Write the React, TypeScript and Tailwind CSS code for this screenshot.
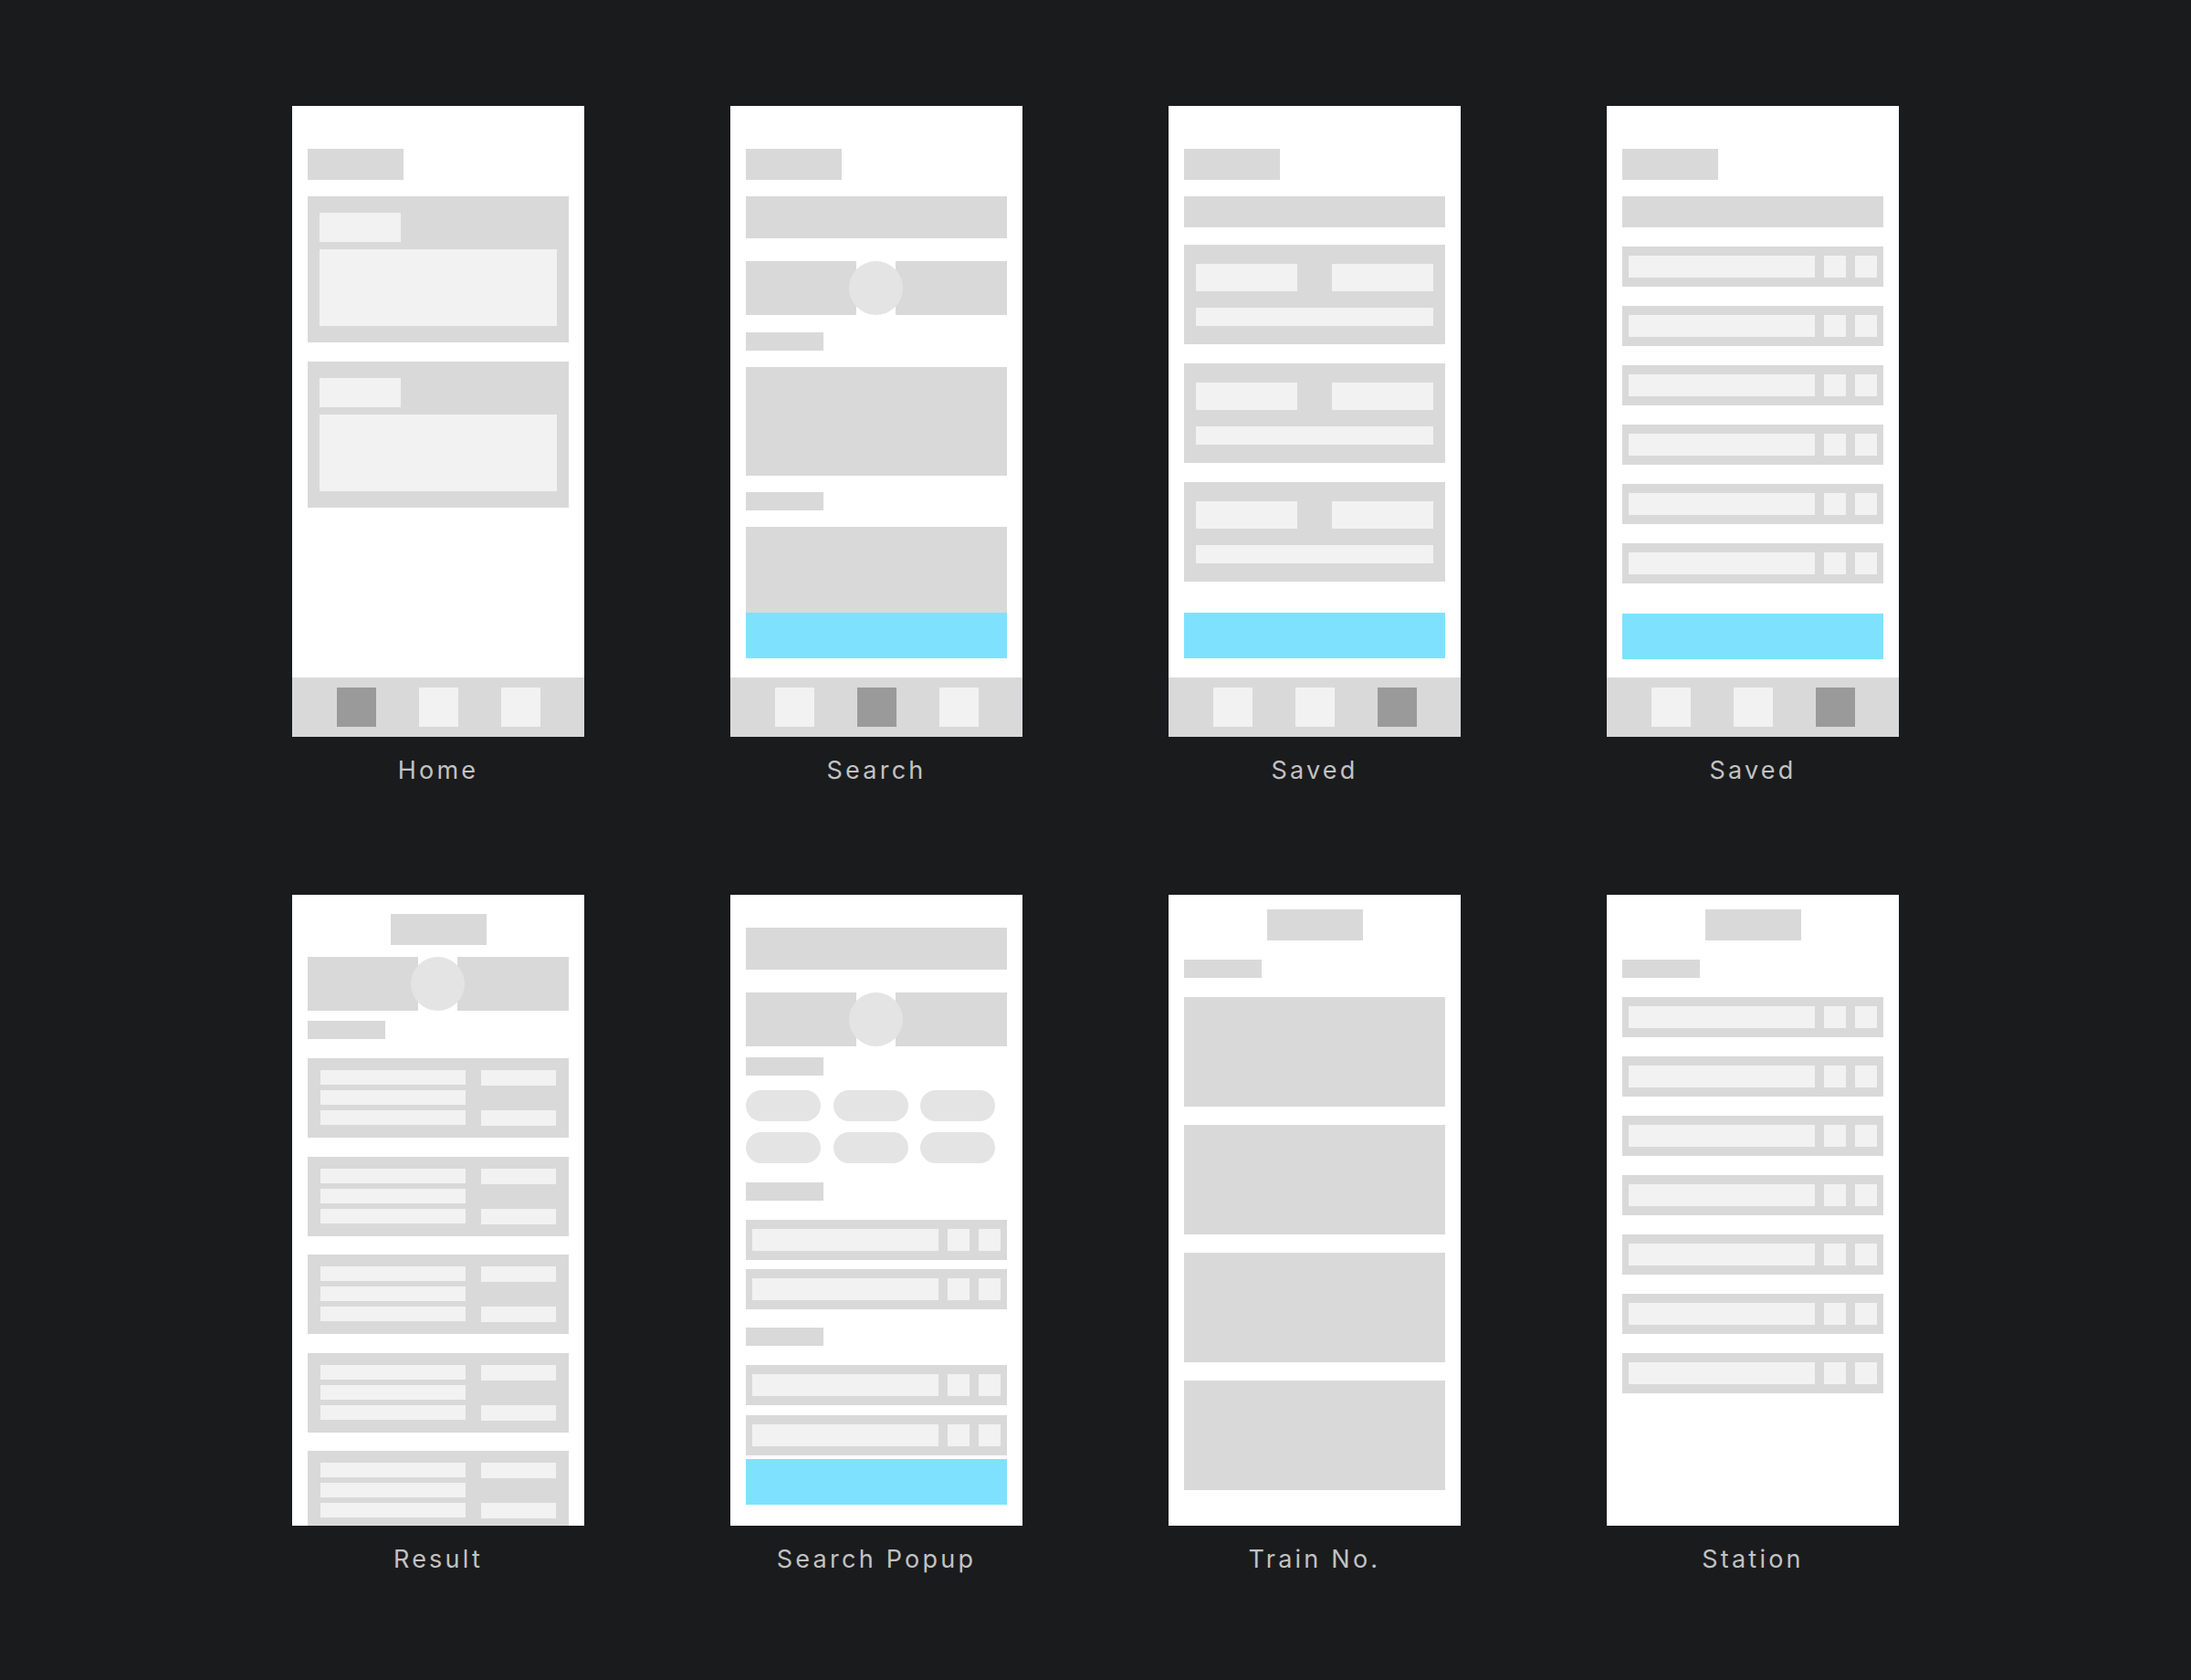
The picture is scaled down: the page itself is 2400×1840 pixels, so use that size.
import React from 'react'

const Phone = ({ children }: { children: React.ReactNode }) => (
    <div className="w-[320px] h-[691px] bg-white flex flex-col overflow-hidden">
        {children}
    </div>
)

const Screen = ({ label, children }: { label: string; children: React.ReactNode }) => (
    <div className="flex flex-col items-center">
        <Phone>{children}</Phone>
        <p className="mt-[21px] h-[32px] leading-[32px] text-[27px] tracking-[0.12em] text-[#c2c2c2] font-['Inter',sans-serif]">
            {label}
        </p>
    </div>
)

const Title = ({ center, className = '' }: { center?: boolean; className?: string }) => (
    <div className={`w-[105px] h-[34px] bg-[#d9d9d9] shrink-0 ${center ? 'self-center' : ''} ${className}`} />
)

const Label = ({ className = '' }: { className?: string }) => (
    <div className={`w-[85px] h-[20px] bg-[#d9d9d9] shrink-0 ${className}`} />
)

const FromTo = ({ className = '' }: { className?: string }) => (
    <div className={`relative flex justify-between h-[59px] shrink-0 ${className}`}>
        <div className="w-[121px] bg-[#d9d9d9]" />
        <div className="w-[122px] bg-[#d9d9d9]" />
        <div className="absolute left-[113px] top-0 size-[59px] rounded-full bg-[#e4e4e4]" />
    </div>
)

const ListRow = ({ className = '' }: { className?: string }) => (
    <div className={`h-[44px] shrink-0 bg-[#d9d9d9] flex items-center gap-[10px] px-[7px] ${className}`}>
        <div className="flex-1 h-[24px] bg-[#f2f2f2]" />
        <div className="w-[24px] h-[24px] bg-[#f2f2f2]" />
        <div className="w-[24px] h-[24px] bg-[#f2f2f2]" />
    </div>
)

const Cta = ({ className = '' }: { className?: string }) => (
    <div className={`h-[50px] shrink-0 bg-[#7ee2fe] ${className}`} />
)

const Nav = ({ active }: { active: number }) => (
    <div className="mt-auto h-[65px] shrink-0 bg-[#d9d9d9] flex items-center justify-center gap-[47px]">
        {[0, 1, 2].map((i) => (
            <div key={i} className={`size-[43px] ${i === active ? 'bg-[#9a9a9a]' : 'bg-[#f2f2f2]'}`} />
        ))}
    </div>
)

const HomeCard = ({ className = '' }: { className?: string }) => (
    <div className={`h-[160px] bg-[#d9d9d9] px-[13px] pt-[18px] ${className}`}>
        <div className="w-[89px] h-[32px] bg-[#f2f2f2]" />
        <div className="mt-[8px] h-[84px] bg-[#f2f2f2]" />
    </div>
)

const SavedCard = ({ className = '' }: { className?: string }) => (
    <div className={`h-[109px] shrink-0 bg-[#d9d9d9] px-[13px] pt-[21px] ${className}`}>
        <div className="flex justify-between">
            <div className="w-[111px] h-[30px] bg-[#f2f2f2]" />
            <div className="w-[111px] h-[30px] bg-[#f2f2f2]" />
        </div>
        <div className="mt-[18px] h-[20px] bg-[#f2f2f2]" />
    </div>
)

const ResultCard = () => (
    <div className="h-[87px] shrink-0 bg-[#d9d9d9] px-[14px] py-[13px] flex justify-between">
        <div className="w-[159px] flex flex-col gap-[6px]">
            <div className="h-[16px] bg-[#f2f2f2]" />
            <div className="h-[16px] bg-[#f2f2f2]" />
            <div className="h-[16px] bg-[#f2f2f2]" />
        </div>
        <div className="w-[82px] flex flex-col justify-between">
            <div className="h-[17px] bg-[#f2f2f2]" />
            <div className="h-[17px] bg-[#f2f2f2]" />
        </div>
    </div>
)

const Pill = () => <div className="w-[82px] h-[34px] rounded-full bg-[#e4e4e4]" />

export default function App() {
    return (
        <div className="min-h-[1840px] bg-[#1a1b1d] pt-[116px] flex justify-center">
            <div className="grid grid-cols-[repeat(4,320px)] gap-x-[160px] gap-y-[120px] content-start">
                <Screen label="Home">
                    <div className="flex flex-col px-[17px] pt-[47px]">
                        <Title />
                        <HomeCard className="mt-[18px]" />
                        <HomeCard className="mt-[21px]" />
                    </div>
                    <Nav active={0} />
                </Screen>

                <Screen label="Search">
                    <div className="flex flex-col px-[17px] pt-[47px]">
                        <Title />
                        <div className="mt-[18px] h-[46px] bg-[#d9d9d9]" />
                        <FromTo className="mt-[25px]" />
                        <Label className="mt-[19px]" />
                        <div className="mt-[18px] h-[119px] bg-[#d9d9d9]" />
                        <Label className="mt-[18px]" />
                        <div className="mt-[18px] h-[94px] bg-[#d9d9d9]" />
                        <Cta />
                    </div>
                    <Nav active={1} />
                </Screen>

                <Screen label="Saved">
                    <div className="flex flex-col px-[17px] pt-[47px]">
                        <Title />
                        <div className="mt-[18px] h-[34px] bg-[#d9d9d9]" />
                        <SavedCard className="mt-[19px]" />
                        <SavedCard className="mt-[21px]" />
                        <SavedCard className="mt-[21px]" />
                        <Cta className="mt-[34px]" />
                    </div>
                    <Nav active={2} />
                </Screen>

                <Screen label="Saved">
                    <div className="flex flex-col px-[17px] pt-[47px]">
                        <Title />
                        <div className="mt-[18px] h-[34px] bg-[#d9d9d9]" />
                        <div className="mt-[21px] flex flex-col gap-[21px]">
                            {[0, 1, 2, 3, 4, 5].map((i) => <ListRow key={i} />)}
                        </div>
                        <Cta className="mt-[33px]" />
                    </div>
                    <Nav active={2} />
                </Screen>

                <Screen label="Result">
                    <div className="flex flex-col px-[17px] pt-[21px]">
                        <Title center />
                        <FromTo className="mt-[13px]" />
                        <Label className="mt-[11px]" />
                        <div className="mt-[21px] flex flex-col gap-[20.5px]">
                            {[0, 1, 2, 3, 4].map((i) => <ResultCard key={i} />)}
                        </div>
                    </div>
                </Screen>

                <Screen label="Search Popup">
                    <div className="flex flex-col px-[17px] pt-[36px]">
                        <div className="h-[46px] bg-[#d9d9d9]" />
                        <FromTo className="mt-[25px]" />
                        <Label className="mt-[12px]" />
                        <div className="mt-[16px] grid grid-cols-[repeat(3,82px)] gap-x-[13.5px] gap-y-[12px]">
                            {[0, 1, 2, 3, 4, 5].map((i) => <Pill key={i} />)}
                        </div>
                        <Label className="mt-[21px]" />
                        <ListRow className="mt-[21px]" />
                        <ListRow className="mt-[10px]" />
                        <Label className="mt-[20px]" />
                        <ListRow className="mt-[21px]" />
                        <ListRow className="mt-[11px]" />
                        <Cta className="mt-[4px]" />
                    </div>
                </Screen>

                <Screen label="Train No.">
                    <div className="flex flex-col px-[17px] pt-[16px]">
                        <Title center />
                        <Label className="mt-[21px]" />
                        <div className="mt-[21px] flex flex-col gap-[20px]">
                            {[0, 1, 2, 3].map((i) => <div key={i} className="h-[120px] bg-[#d9d9d9]" />)}
                        </div>
                    </div>
                </Screen>

                <Screen label="Station">
                    <div className="flex flex-col px-[17px] pt-[16px]">
                        <Title center />
                        <Label className="mt-[21px]" />
                        <div className="mt-[21px] flex flex-col gap-[21px]">
                            {[0, 1, 2, 3, 4, 5, 6].map((i) => <ListRow key={i} />)}
                        </div>
                    </div>
                </Screen>
            </div>
        </div>
    )
}
